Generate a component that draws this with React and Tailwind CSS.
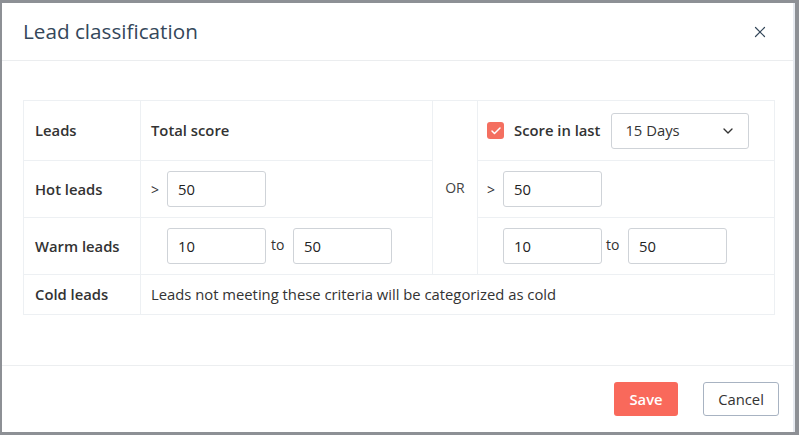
import { X, ChevronDown, Check } from 'lucide-react';

const CELL = 'border border-[#edf0f3] align-middle';
const LABEL = 'px-[11px] text-[14.8px] font-semibold text-[#333]';
const INPUT = 'w-[99px] h-[36px] border border-[#cfd3d8] rounded-[3px] px-[10px] text-[14.8px] text-[#222] bg-white outline-none';

function NumInput({ value }) {
  return <input type="text" defaultValue={value} className={INPUT} />;
}

export default function App() {
  return (
    <div
      className="w-[799px] h-[435px] bg-[#8d9095] pt-[3px] pl-[2px] pr-[4px] pb-[3px]"
      style={{ fontFamily: '"Open Sans", "Liberation Sans", sans-serif' }}
    >
      <div className="h-full bg-white flex flex-col border-r-2 border-[#e6eaf0]">
        <div className="h-[58px] flex items-center justify-between pl-[21px] pr-[24px] border-b border-[#ebedef]">
          <h1 className="text-[20.7px] text-[#34475a]">Lead classification</h1>
          <X size={18} strokeWidth={1.6} className="text-[#34475a]" />
        </div>

        <div className="flex-1 pt-[39px] px-[21px]">
          <table className="border-collapse table-fixed w-[751px] border border-[#e6e8ea]">
            <colgroup>
              <col className="w-[117px]" />
              <col className="w-[292px]" />
              <col className="w-[45px]" />
              <col className="w-[297px]" />
            </colgroup>
            <tbody>
              <tr className="h-[60px]">
                <td className={CELL + ' ' + LABEL}>Leads</td>
                <td className={CELL + ' px-[10px] text-[14.8px] font-semibold text-[#333]'}>Total score</td>
                <td rowSpan={3} className={CELL + ' text-center text-[14px] text-[#444]'}>OR</td>
                <td className={CELL + ' px-[9px]'}>
                  <div className="flex items-center">
                    <span className="w-[17px] h-[17px] rounded-[3px] bg-[#f46f60] flex items-center justify-center">
                      <Check size={12} strokeWidth={3} className="text-white" />
                    </span>
                    <span className="ml-[10px] text-[14.8px] font-semibold text-[#333]">Score in last</span>
                    <div className="ml-[11px] w-[138px] h-[36px] border border-[#cfd3d8] rounded-[3px] flex items-center justify-between pl-[13px] pr-[12px]">
                      <span className="text-[14.8px] text-[#333]">15 Days</span>
                      <ChevronDown size={16} strokeWidth={2} className="text-[#333]" />
                    </div>
                  </div>
                </td>
              </tr>
              <tr className="h-[57px]">
                <td className={CELL + ' ' + LABEL}>Hot leads</td>
                <td className={CELL + ' px-[10px]'}>
                  <div className="flex items-center">
                    <span className="w-[16px] text-[14px] text-[#333]">&gt;</span>
                    <NumInput value="50" />
                  </div>
                </td>
                <td className={CELL + ' px-[9px]'}>
                  <div className="flex items-center">
                    <span className="w-[16px] text-[14px] text-[#333]">&gt;</span>
                    <NumInput value="50" />
                  </div>
                </td>
              </tr>
              <tr className="h-[57px]">
                <td className={CELL + ' ' + LABEL}>Warm leads</td>
                <td className={CELL + ' px-[10px]'}>
                  <div className="flex items-center pl-[16px]">
                    <NumInput value="10" />
                    <span className="w-[27px] pl-[5px] text-[14px] text-[#333] -mt-[4px]">to</span>
                    <NumInput value="50" />
                  </div>
                </td>
                <td className={CELL + ' px-[9px]'}>
                  <div className="flex items-center pl-[16px]">
                    <NumInput value="10" />
                    <span className="w-[26px] pl-[4px] text-[14px] text-[#333] -mt-[4px]">to</span>
                    <NumInput value="50" />
                  </div>
                </td>
              </tr>
              <tr className="h-[40px]">
                <td className={CELL + ' ' + LABEL}>Cold leads</td>
                <td colSpan={3} className={CELL + ' px-[10px] text-[14.8px] text-[#333]'}>
                  Leads not meeting these criteria will be categorized as cold
                </td>
              </tr>
            </tbody>
          </table>
        </div>

        <div className="h-[67px] border-t border-[#eceef0] flex items-center justify-end pr-[14px] gap-[25px]">
          <button className="w-[64px] h-[34px] rounded-[3px] bg-[#f9695b] text-white text-[14.8px] font-semibold">Save</button>
          <button className="w-[76px] h-[34px] rounded-[3px] border border-[#a8b3c2] bg-white text-[#333] text-[14.8px]">Cancel</button>
        </div>
      </div>
    </div>
  );
}
